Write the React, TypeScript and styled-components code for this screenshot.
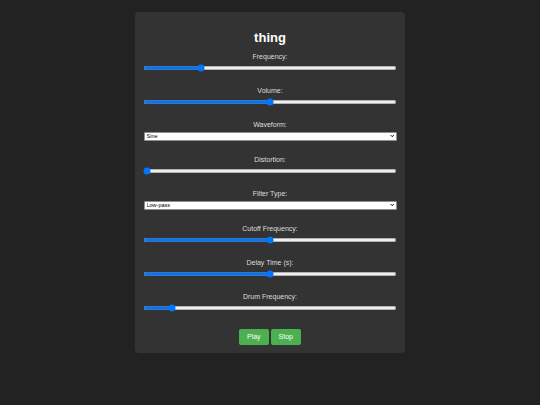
import React, { useState } from "react";
import styled, { createGlobalStyle } from "styled-components";

const Global = createGlobalStyle`
  html, body { margin: 0; padding: 0; background: #222222; }
  body { font-family: "Liberation Sans", Arial, sans-serif; }
`;

const Page = styled.div`
  zoom: 0.5;
  width: 1080px;
  min-height: 810px;
  padding-top: 24px;
  box-sizing: border-box;
`;

const Card = styled.div`
  width: 540px;
  margin: 0 auto;
  box-sizing: border-box;
  padding: 0 16px 16px;
  background: #333333;
  border-radius: 8px;
  display: flex;
  flex-direction: column;
  align-items: stretch;
`;

const Title = styled.h1`
  margin: 35px 0 16px;
  font-size: 26px;
  line-height: 30px;
  font-weight: bold;
  color: #ffffff;
  text-align: center;
`;

const Group = styled.div`
  display: flex;
  flex-direction: column;
  gap: 6px;
  margin-bottom: 30px;
`;

const Label = styled.label`
  display: block;
  text-align: center;
  color: #dddddd;
  font-size: 14px;
  line-height: 16px;
`;

const Range = styled.input`
  display: block;
  width: 100%;
  height: 16px;
  margin: 0;
`;

const SelectWrap = styled.div`
  position: relative;
  padding: 0 1px;
`;

const Select = styled.select`
  display: block;
  width: 100%;
  height: 18px;
  margin: 0;
  padding: 0 4px;
  appearance: none;
  -webkit-appearance: none;
  border: 1px solid #8f8f8f;
  border-radius: 2px;
  font-size: 11px;
  font-family: "Liberation Sans", Arial, sans-serif;
  background: #ffffff;
  color: #000000;
`;

const Chevron = styled.svg`
  position: absolute;
  right: 6px;
  top: 5px;
  width: 9px;
  height: 8px;
  pointer-events: none;
`;

const Buttons = styled.div`
  display: flex;
  justify-content: center;
  gap: 4px;
  margin-top: 4px;
`;

const Button = styled.button`
  background: #4caf50;
  color: #ffffff;
  border: none;
  border-radius: 4px;
  padding: 8px 16px;
  font-size: 14px;
  line-height: 16px;
  font-family: "Liberation Sans", Arial, sans-serif;
  cursor: pointer;
`;

type Slider = { label: string; min: number; max: number; value: number; step?: number };

function RangeGroup({ s }: { s: Slider }) {
  const [v, setV] = useState(s.value);
  return (
    <Group>
      <Label>{s.label}</Label>
      <Range
        type="range"
        min={s.min}
        max={s.max}
        step={s.step ?? 1}
        value={v}
        onChange={(e) => setV(Number(e.target.value))}
      />
    </Group>
  );
}

function SelectGroup({ label, options }: { label: string; options: string[] }) {
  return (
    <Group>
      <Label>{label}</Label>
      <SelectWrap>
        <Select defaultValue={options[0]}>
          {options.map((o) => (
            <option key={o}>{o}</option>
          ))}
        </Select>
        <Chevron viewBox="0 0 10 8">
          <path d="M1.5 2 L5 5.5 L8.5 2" fill="none" stroke="#000" strokeWidth="2.2" />
        </Chevron>
      </SelectWrap>
    </Group>
  );
}

export default function App() {
  return (
    <>
      <Global />
      <Page>
        <Card>
          <Title>thing</Title>
          <RangeGroup s={{ label: "Frequency:", min: 0, max: 100, value: 22 }} />
          <RangeGroup s={{ label: "Volume:", min: 0, max: 100, value: 50 }} />
          <SelectGroup label="Waveform:" options={["Sine", "Square", "Sawtooth", "Triangle"]} />
          <RangeGroup s={{ label: "Distortion:", min: 0, max: 100, value: 0 }} />
          <SelectGroup label="Filter Type:" options={["Low-pass", "High-pass", "Band-pass"]} />
          <RangeGroup s={{ label: "Cutoff Frequency:", min: 0, max: 100, value: 50 }} />
          <RangeGroup s={{ label: "Delay Time (s):", min: 0, max: 100, value: 50 }} />
          <RangeGroup s={{ label: "Drum Frequency:", min: 0, max: 100, value: 10 }} />
          <Buttons>
            <Button>Play</Button>
            <Button>Stop</Button>
          </Buttons>
        </Card>
      </Page>
    </>
  );
}
